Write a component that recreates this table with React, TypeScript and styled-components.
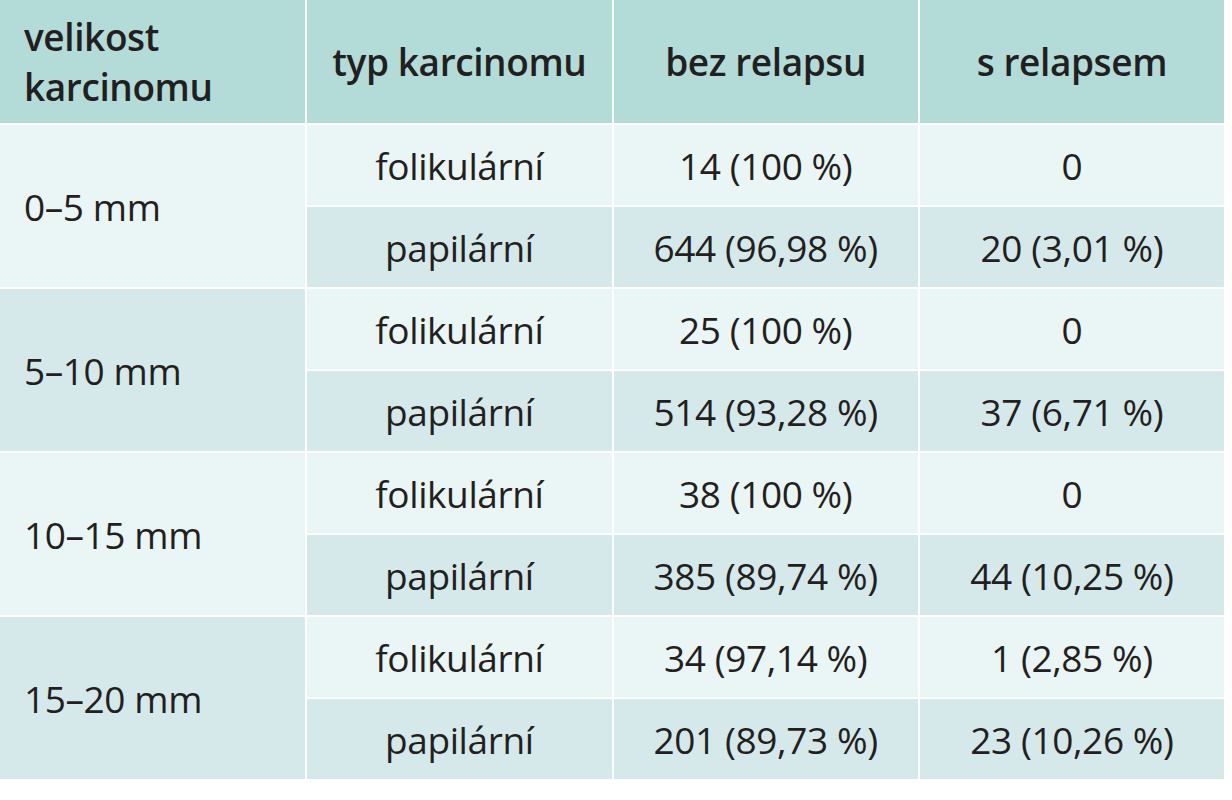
import React, { FC, ReactElement } from 'react'
import styled, { createGlobalStyle } from 'styled-components'

const GlobalStyle = createGlobalStyle`
  body {
    margin: 0;
    background: #ffffff;
    font-family: "Open Sans", "Noto Sans", sans-serif;
    color: #231f20;
  }
`

const Table = styled.table`
  width: 1226px;
  border-collapse: collapse;
  table-layout: fixed;
  font-size: 37px;
  letter-spacing: -0.4px;
`

const HeadCell = styled.th<{ $left?: boolean }>`
  height: 123px;
  padding: 0 24px;
  background: #b3dcd8;
  border: 2px solid #ffffff;
  border-top: none;
  font-weight: 600;
  line-height: 50px;
  text-align: ${(p) => (p.$left ? 'left' : 'center')};
  vertical-align: middle;
  &:first-child { border-left: none; }
`

const Cell = styled.td<{ $dark?: boolean; $left?: boolean }>`
  height: 80px;
  padding: 0 24px;
  background: ${(p) => (p.$dark ? '#d6e9ea' : '#eaf5f5')};
  border: 2px solid #ffffff;
  text-align: ${(p) => (p.$left ? 'left' : 'center')};
  vertical-align: middle;
  font-weight: 400;
  white-space: nowrap;
  &:first-child { border-left: none; }
`

type Row = {
  size: string
  fol: [string, string]
  pap: [string, string]
}

const rows: Row[] = [
  { size: '0–5 mm', fol: ['14 (100 %)', '0'], pap: ['644 (96,98 %)', '20 (3,01 %)'] },
  { size: '5–10 mm', fol: ['25 (100 %)', '0'], pap: ['514 (93,28 %)', '37 (6,71 %)'] },
  { size: '10–15 mm', fol: ['38 (100 %)', '0'], pap: ['385 (89,74 %)', '44 (10,25 %)'] },
  { size: '15–20 mm', fol: ['34 (97,14 %)', '1 (2,85 %)'], pap: ['201 (89,73 %)', '23 (10,26 %)'] },
]

const App: FC = (): ReactElement => {
  return (
    <>
      <GlobalStyle />
      <Table>
        <thead>
          <tr>
            <HeadCell $left>velikost<br />karcinomu</HeadCell>
            <HeadCell>typ karcinomu</HeadCell>
            <HeadCell>bez relapsu</HeadCell>
            <HeadCell>s relapsem</HeadCell>
          </tr>
        </thead>
        <tbody>
          {rows.map((r, i) => (
            <React.Fragment key={r.size}>
              <tr>
                <Cell rowSpan={2} $left $dark={i % 2 === 1}>{r.size}</Cell>
                <Cell>folikulární</Cell>
                <Cell>{r.fol[0]}</Cell>
                <Cell>{r.fol[1]}</Cell>
              </tr>
              <tr>
                <Cell $dark>papilární</Cell>
                <Cell $dark>{r.pap[0]}</Cell>
                <Cell $dark>{r.pap[1]}</Cell>
              </tr>
            </React.Fragment>
          ))}
        </tbody>
      </Table>
    </>
  )
}

export default App
